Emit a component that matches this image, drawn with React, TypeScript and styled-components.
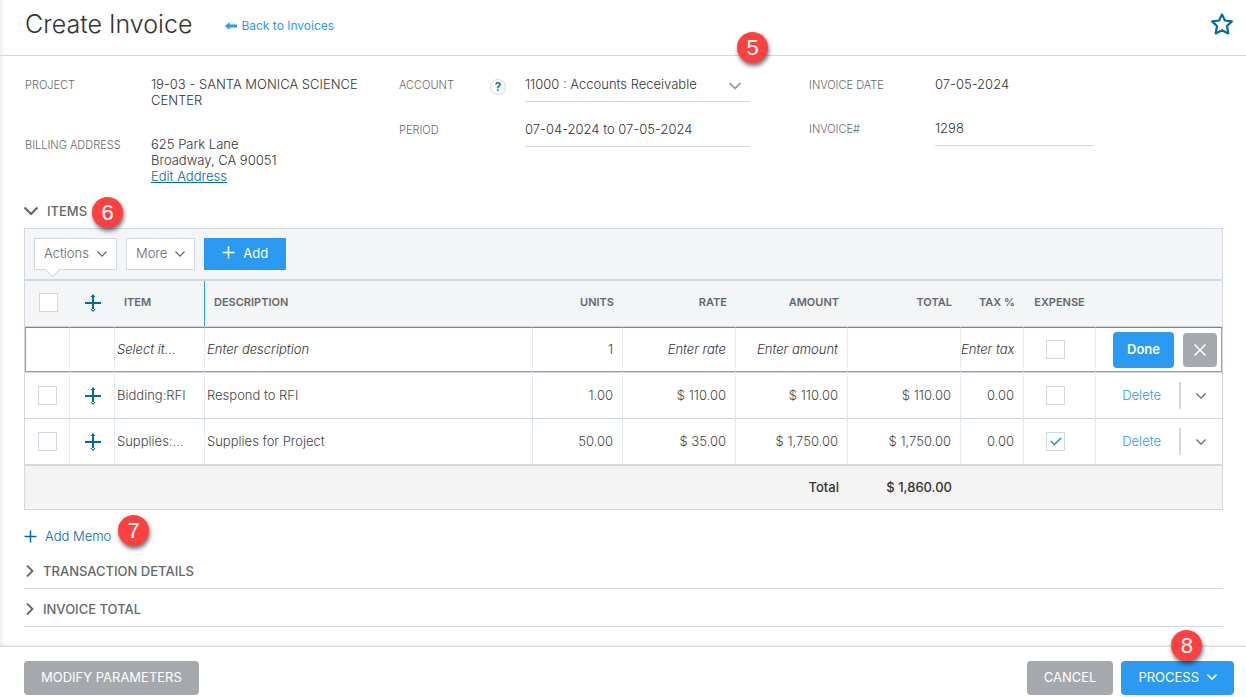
import React from "react";
import styled, { createGlobalStyle, css } from "styled-components";

const color = {
  blue: "#2b9af3",
  deepBlue: "#006ba6",
  line: "#d2d8df",
  panel: "#f3f5f7",
  total: "#f4f4f4",
  gray: "#a5a8ad",
  text: "#333",
  cell: "#444",
  label: "#64676c",
};

const GlobalStyle = createGlobalStyle`
  *, *::before, *::after { box-sizing: border-box; }
  body { margin: 0; background: #fff; }
  body, button, input, select {
    font-family: Inter, "Liberation Sans", sans-serif;
    font-size: 13px;
    line-height: 16px;
    color: ${color.text};
  }
  button { cursor: pointer; }
`;

const Page = styled.div`
  min-height: 100vh;
  display: flex;
  flex-direction: column;
  box-shadow: inset 5px 0 5px -4px #e6e6e6;
`;

const Header = styled.header`
  height: 56px;
  display: flex;
  align-items: center;
  padding: 0 12px 8px 25px;
  border-bottom: 1px solid ${color.line};
`;

const Title = styled.h1`
  margin: 0 33px 0 0;
  font-size: 25px;
  line-height: 32px;
  font-weight: 300;
  color: #333;
`;

const BackLink = styled.a`
  display: flex;
  align-items: center;
  gap: 4px;
  padding-top: 4px;
  color: ${color.blue};
  text-decoration: none;
  font-size: 12px;
`;

const StarButton = styled.button`
  margin-left: auto;
  padding: 0;
  border: 0;
  background: none;
  display: flex;
`;

const Main = styled.main`
  flex: 1;
  padding: 0 23px 18px 24px;
`;

const FormGrid = styled.div`
  display: grid;
  grid-template-columns: 374fr 410fr 414fr;
  padding: 20px 0 19px 1px;
`;

const FormColumn = styled.div<{ $gap: number }>`
  display: flex;
  flex-direction: column;
  gap: ${(p) => p.$gap}px;
`;

const Field = styled.div`
  display: flex;
  align-items: flex-start;
`;

const fieldLabel = css`
  flex: none;
  width: 126px;
  padding-top: 1px;
  font-size: 11px;
  font-weight: 300;
  color: ${color.label};
`;

const FieldName = styled.span`
  ${fieldLabel}
`;

const FieldLabel = styled.label`
  ${fieldLabel}
`;

const FieldValue = styled.div`
  width: 215px;
  font-weight: 300;
`;

const AddressLink = styled.a`
  display: block;
  width: max-content;
  color: ${color.deepBlue};
`;

const LabelGroup = styled.div`
  ${fieldLabel}
  display: flex;
  justify-content: space-between;
  padding-right: 19px;
`;

const HelpButton = styled.button`
  width: 16px;
  height: 16px;
  margin-top: 2px;
  padding: 0;
  border: 1px solid ${color.line};
  border-radius: 50%;
  background: #fff;
  color: ${color.deepBlue};
  font-size: 12px;
  font-weight: 600;
  line-height: 14px;
`;

const ControlWrap = styled.div`
  position: relative;
  width: 225px;
`;

const control = css`
  height: 26px;
  padding: 0 0 9px;
  border: 0;
  border-bottom: 1px solid ${color.line};
  border-radius: 0;
  background: transparent;
  font-weight: 300;
  outline: 0;
`;

const Select = styled.select`
  ${control}
  width: 100%;
  appearance: none;
`;

const TextInput = styled.input<{ $width: number }>`
  ${control}
  width: ${(p) => p.$width}px;
`;

const SelectArrow = styled.span`
  position: absolute;
  right: 9px;
  top: 4px;
  display: flex;
  pointer-events: none;
`;

const Badge = styled.span<{ $left: number; $top: number }>`
  position: absolute;
  left: ${(p) => p.$left}px;
  top: ${(p) => p.$top}px;
  z-index: 2;
  width: 31px;
  height: 31px;
  border-radius: 50%;
  background: #fd4141;
  box-shadow: 1px 3px 4px rgba(0, 0, 0, 0.55);
  color: #fff;
  font: 400 22px/31px "Liberation Sans", sans-serif;
  text-align: center;
`;

const SectionButton = styled.button<{ $gap: number }>`
  position: relative;
  display: flex;
  align-items: center;
  gap: ${(p) => p.$gap}px;
  padding: 0;
  border: 0;
  background: none;
  font-weight: 500;
  color: ${color.label};
`;

const ItemsPanel = styled.section`
  margin-top: 9px;
  border: 1px solid ${color.line};
`;

const Toolbar = styled.div`
  display: flex;
  gap: 9px;
  padding: 9px;
  background: ${color.panel};
  border-bottom: 2px solid ${color.line};
`;

const MenuButton = styled.button<{ $notch?: boolean }>`
  position: relative;
  display: flex;
  align-items: center;
  gap: 8px;
  height: 32px;
  padding: 0 9px 3px;
  border: 1px solid ${color.line};
  background: #fff;
  font-weight: 300;
  color: ${color.label};
  svg {
    margin-top: 3px;
  }
  ${(p) =>
    p.$notch &&
    css`
      &::after {
        content: "";
        position: absolute;
        left: 12px;
        bottom: -6px;
        width: 11px;
        height: 11px;
        background: #fff;
        border: solid ${color.line};
        border-width: 0 1px 1px 0;
        transform: rotate(45deg);
      }
    `}
`;

const AddButton = styled.button`
  display: flex;
  align-items: center;
  gap: 8px;
  height: 32px;
  padding: 0 18px 3px;
  border: 0;
  background: ${color.blue};
  color: #fff;
`;

const Table = styled.table`
  width: 100%;
  table-layout: fixed;
  border-collapse: separate;
  border-spacing: 0;
`;

const Col = styled.col<{ $width?: number }>`
  width: ${(p) => (p.$width ? `${p.$width}px` : "auto")};
`;

type Align = "left" | "right" | "center";

const HeadCell = styled.th<{ $align?: Align; $accent?: boolean }>`
  height: 46px;
  padding: 0 ${(p) => (p.$align === "right" ? 8 : 0)}px ${(p) => (p.$align ? 4 : 2)}px
    ${(p) => (p.$align === "left" ? 9 : p.$align ? 0 : 2)}px;
  background: ${color.panel};
  border-bottom: 1px solid ${color.line};
  border-right: 1px solid ${(p) => (p.$accent ? color.blue : "transparent")};
  font-size: 11px;
  font-weight: 600;
  color: ${color.label};
  text-align: ${(p) => p.$align || "center"};
  white-space: nowrap;
`;

const Cell = styled.td<{ $align?: Align; $end?: number }>`
  height: 46px;
  padding: 0 ${(p) => p.$end ?? (p.$align === "right" ? 9 : 0)}px ${(p) => (p.$align ? 2 : 0)}px
    ${(p) => (p.$align === "left" ? 2 : 0)}px;
  border-bottom: 1px solid ${color.line};
  border-right: 1px dotted ${color.line};
  font-weight: 300;
  color: ${color.cell};
  text-align: ${(p) => p.$align || "center"};
  white-space: nowrap;
  overflow: hidden;
  &:last-child {
    border-right: 0;
  }
`;

const EditRow = styled.tr`
  ${Cell} {
    height: 45px;
    border-top: 1px solid ${color.blue};
    border-bottom-color: #9b9ea3;
  }
  ${Cell}:first-child {
    border-left: 1px solid #9b9ea3;
  }
  ${Cell}:last-child {
    border-right: 1px solid #9b9ea3;
  }
  & + tr ${Cell} {
    height: 47px;
    border-top: 1px solid ${color.line};
  }
`;

const CellInput = styled.input<{ $align?: Align }>`
  display: block;
  width: 100%;
  padding: 0;
  border: 0;
  outline: 0;
  background: transparent;
  font-weight: 300;
  color: ${color.cell};
  text-align: ${(p) => p.$align || "left"};
  &::placeholder {
    color: ${color.text};
    font-style: italic;
    opacity: 1;
  }
`;

const TotalCell = styled.td`
  height: 44px;
  padding: 0 9px 2px 0;
  border-top: 1px solid ${color.line};
  background: ${color.total};
  font-weight: 500;
  color: #333;
  text-align: right;
`;

const CheckWrap = styled.span`
  position: relative;
  display: inline-flex;
  vertical-align: middle;
  svg {
    position: absolute;
    left: 4px;
    top: 5px;
    pointer-events: none;
    visibility: hidden;
  }
  input:checked + svg {
    visibility: visible;
  }
`;

const CheckInput = styled.input`
  appearance: none;
  width: 19px;
  height: 19px;
  margin: 0;
  border: 1px solid ${color.line};
  background: #fff;
`;

const IconButton = styled.button`
  display: inline-flex;
  padding: 0;
  border: 0;
  background: none;
  vertical-align: middle;
`;

const MoveCell = styled(Cell)`
  padding-left: 2px;
`;

const RowActions = styled.div`
  display: flex;
  align-items: center;
  justify-content: flex-end;
`;

const DeleteButton = styled.button`
  padding: 0 18px 2px 0;
  border: 0;
  background: none;
  font-weight: 300;
  color: ${color.blue};
`;

const RowMenu = styled.button`
  display: flex;
  align-items: center;
  height: 27px;
  padding: 0 16px 0 15px;
  border: 0;
  border-left: 2px solid ${color.line};
  background: none;
`;

const EditActions = styled.div`
  display: flex;
  align-items: center;
  justify-content: flex-end;
  gap: 9px;
  padding-right: 4px;
`;

const DoneButton = styled.button`
  height: 36px;
  padding: 0 14px 2px;
  border: 0;
  border-radius: 4px;
  background: ${color.blue};
  font-weight: 600;
  color: #fff;
`;

const CloseButton = styled.button`
  display: flex;
  align-items: center;
  justify-content: center;
  width: 34px;
  height: 34px;
  padding: 0;
  border: 0;
  border-radius: 4px;
  background: ${color.gray};
`;

const MemoButton = styled.button`
  position: relative;
  display: flex;
  align-items: center;
  gap: 8px;
  margin: 18px 0 7px;
  padding: 0;
  border: 0;
  background: none;
  font-weight: 300;
  color: ${color.deepBlue};
`;

const Collapsed = styled.section`
  display: flex;
  align-items: center;
  height: 38px;
  padding-top: 3px;
  border-bottom: 1px solid ${color.line};
`;

const Footer = styled.footer`
  display: flex;
  gap: 8px;
  padding: 14px 12px 2px 24px;
  border-top: 1px solid #dcdcdc;
  box-shadow: 0 -1px 2px rgba(0, 0, 0, 0.1);
  background: #fff;
`;

const FooterButton = styled.button<{ $primary?: boolean; $push?: boolean }>`
  position: relative;
  display: flex;
  align-items: center;
  gap: 8px;
  height: 34px;
  padding: 0 17px 2px;
  margin-left: ${(p) => (p.$push ? "auto" : "0")};
  border: 0;
  border-radius: 4px;
  background: ${(p) => (p.$primary ? color.blue : color.gray)};
  color: #fff;
`;

const Chevron = ({ size = 10, stroke = color.label, width = 1.5, right = false }) => (
  <svg width={size} height={size} viewBox="0 0 12 12" fill="none" stroke={stroke} strokeWidth={width} aria-hidden="true">
    <path d={right ? "M3 0.5 8.5 6 3 11.5" : "M0.5 3 6 8.5 11.5 3"} />
  </svg>
);

const Plus = ({ stroke }: { stroke: string }) => (
  <svg width="13" height="13" viewBox="0 0 13 13" stroke={stroke} strokeWidth="1.5" aria-hidden="true">
    <path d="M6.5 0.5v12M0.5 6.5h12" />
  </svg>
);

const MoveIcon = () => (
  <svg width="16" height="18" viewBox="0 0 16 18" fill={color.deepBlue} aria-hidden="true">
    <path d="M7 2h2v14H7zM0 8h16v2H0zM8 0l2.5 3h-5zM8 18l2.5-3h-5z" />
  </svg>
);

const Check = ({ label, checked = false }: { label: string; checked?: boolean }) => (
  <CheckWrap>
    <CheckInput type="checkbox" aria-label={label} defaultChecked={checked} />
    <svg width="12" height="9" viewBox="0 0 12 9" fill="none" stroke={color.blue} strokeWidth="1.7">
      <path d="M0.7 4 4.2 7.5 11.3 0.8" />
    </svg>
  </CheckWrap>
);

const MoveButton = ({ label }: { label: string }) => (
  <IconButton type="button" aria-label={label}>
    <MoveIcon />
  </IconButton>
);

const columnWidths = [45, 45, 90, undefined, 90, 113, 112, 113, 63, 72, 126];

const rows = [
  { item: "Bidding:RFI", description: "Respond to RFI", units: "1.00", rate: "$ 110.00", amount: "$ 110.00", total: "$ 110.00", tax: "0.00", expense: false },
  { item: "Supplies:...", description: "Supplies for Project", units: "50.00", rate: "$ 35.00", amount: "$ 1,750.00", total: "$ 1,750.00", tax: "0.00", expense: true },
];

export default function App() {
  return (
    <>
      <GlobalStyle />
      <Page>
        <Header>
          <Title>Create Invoice</Title>
          <BackLink href="#invoices">
            <svg width="12" height="8" viewBox="0 0 12 8" fill={color.blue} aria-hidden="true">
              <path d="M4.5 0v2.5H12v3H4.5V8L0 4z" />
            </svg>
            Back to Invoices
          </BackLink>
          <StarButton type="button" aria-label="Add to favorites">
            <svg width="24" height="24" viewBox="0 0 24 24" fill="none" stroke={color.deepBlue} strokeWidth="2.2" strokeLinejoin="round">
              <path d="M12 2.4 14.9 8.5 21.9 9.4 17 14 18.3 21.4 12 18.2 5.7 21.4 7 14 2.1 9.4 9.1 8.5z" />
            </svg>
          </StarButton>
        </Header>

        <Main>
          <FormGrid>
            <FormColumn $gap={28}>
              <Field>
                <FieldName>PROJECT</FieldName>
                <FieldValue>19-03 - SANTA MONICA SCIENCE CENTER</FieldValue>
              </Field>
              <Field>
                <FieldName>BILLING ADDRESS</FieldName>
                <FieldValue>
                  625 Park Lane
                  <br />
                  Broadway, CA 90051
                  <AddressLink href="#address">Edit Address</AddressLink>
                </FieldValue>
              </Field>
            </FormColumn>
            <FormColumn $gap={19}>
              <Field>
                <LabelGroup>
                  <label htmlFor="account">ACCOUNT</label>
                  <HelpButton type="button" aria-label="Account help">?</HelpButton>
                </LabelGroup>
                <ControlWrap>
                  <Select id="account">
                    <option>11000 : Accounts Receivable</option>
                  </Select>
                  <SelectArrow>
                    <Chevron size={12} stroke="#9a9da1" width={1.8} />
                  </SelectArrow>
                  <Badge $left={212} $top={-44}>5</Badge>
                </ControlWrap>
              </Field>
              <Field>
                <FieldLabel htmlFor="period">PERIOD</FieldLabel>
                <TextInput id="period" $width={225} defaultValue="07-04-2024 to 07-05-2024" />
              </Field>
            </FormColumn>
            <FormColumn $gap={27}>
              <Field>
                <FieldName>INVOICE DATE</FieldName>
                <FieldValue>07-05-2024</FieldValue>
              </Field>
              <Field>
                <FieldLabel htmlFor="number">INVOICE#</FieldLabel>
                <TextInput id="number" $width={158} defaultValue="1298" />
              </Field>
            </FormColumn>
          </FormGrid>

          <SectionButton type="button" $gap={9}>
            <Chevron size={14} width={1.8} />
            ITEMS
            <Badge $left={68} $top={-6}>6</Badge>
          </SectionButton>

          <ItemsPanel>
            <Toolbar>
              <MenuButton type="button" $notch>
                Actions <Chevron />
              </MenuButton>
              <MenuButton type="button">
                More <Chevron />
              </MenuButton>
              <AddButton type="button">
                <Plus stroke="#fff" /> Add
              </AddButton>
            </Toolbar>
            <Table>
              <colgroup>
                {columnWidths.map((w, i) => (
                  <Col key={i} $width={w} />
                ))}
              </colgroup>
              <thead>
                <tr>
                  <HeadCell><Check label="Select all" /></HeadCell>
                  <HeadCell><MoveButton label="Reorder" /></HeadCell>
                  <HeadCell $align="left" $accent>ITEM</HeadCell>
                  <HeadCell $align="left">DESCRIPTION</HeadCell>
                  <HeadCell $align="right">UNITS</HeadCell>
                  <HeadCell $align="right">RATE</HeadCell>
                  <HeadCell $align="right">AMOUNT</HeadCell>
                  <HeadCell $align="right">TOTAL</HeadCell>
                  <HeadCell $align="right">TAX %</HeadCell>
                  <HeadCell $align="center">EXPENSE</HeadCell>
                  <HeadCell />
                </tr>
              </thead>
              <tbody>
                <EditRow>
                  <Cell />
                  <Cell />
                  <Cell $align="left"><CellInput aria-label="Item" placeholder="Select it..." /></Cell>
                  <Cell $align="left"><CellInput aria-label="Description" placeholder="Enter description" /></Cell>
                  <Cell $align="right"><CellInput aria-label="Units" $align="right" defaultValue="1" /></Cell>
                  <Cell $align="right"><CellInput aria-label="Rate" $align="right" placeholder="Enter rate" /></Cell>
                  <Cell $align="right"><CellInput aria-label="Amount" $align="right" placeholder="Enter amount" /></Cell>
                  <Cell />
                  <Cell $align="right"><CellInput aria-label="Tax" $align="right" placeholder="Enter tax" /></Cell>
                  <Cell $end={8}><Check label="Expense" /></Cell>
                  <Cell>
                    <EditActions>
                      <DoneButton type="button">Done</DoneButton>
                      <CloseButton type="button" aria-label="Discard">
                        <svg width="12" height="12" viewBox="0 0 12 12" stroke="#fff" strokeWidth="1.5">
                          <path d="M0.5 0.5 11.5 11.5M11.5 0.5 0.5 11.5" />
                        </svg>
                      </CloseButton>
                    </EditActions>
                  </Cell>
                </EditRow>
                {rows.map((row) => (
                  <tr key={row.item}>
                    <Cell><Check label={`Select ${row.item}`} /></Cell>
                    <MoveCell><MoveButton label={`Move ${row.item}`} /></MoveCell>
                    <Cell $align="left">{row.item}</Cell>
                    <Cell $align="left">{row.description}</Cell>
                    <Cell $align="right">{row.units}</Cell>
                    <Cell $align="right">{row.rate}</Cell>
                    <Cell $align="right">{row.amount}</Cell>
                    <Cell $align="right">{row.total}</Cell>
                    <Cell $align="right">{row.tax}</Cell>
                    <Cell $end={8}><Check label={`Expense ${row.item}`} checked={row.expense} /></Cell>
                    <Cell>
                      <RowActions>
                        <DeleteButton type="button">Delete</DeleteButton>
                        <RowMenu type="button" aria-label={`More for ${row.item}`}>
                          <Chevron />
                        </RowMenu>
                      </RowActions>
                    </Cell>
                  </tr>
                ))}
              </tbody>
              <tfoot>
                <tr>
                  <TotalCell colSpan={7}>Total</TotalCell>
                  <TotalCell>$ 1,860.00</TotalCell>
                  <TotalCell colSpan={3} />
                </tr>
              </tfoot>
            </Table>
          </ItemsPanel>

          <MemoButton type="button">
            <Plus stroke={color.deepBlue} /> Add Memo
            <Badge $left={94} $top={-13}>7</Badge>
          </MemoButton>
          <Collapsed>
            <SectionButton type="button" $gap={7}>
              <Chevron size={12} width={1.8} right />
              TRANSACTION DETAILS
            </SectionButton>
          </Collapsed>
          <Collapsed>
            <SectionButton type="button" $gap={7}>
              <Chevron size={12} width={1.8} right />
              INVOICE TOTAL
            </SectionButton>
          </Collapsed>
        </Main>

        <Footer>
          <FooterButton type="button">MODIFY PARAMETERS</FooterButton>
          <FooterButton type="button" $push>CANCEL</FooterButton>
          <FooterButton type="button" $primary>
            PROCESS <Chevron stroke="#fff" width={1.8} />
            <Badge $left={50} $top={-31}>8</Badge>
          </FooterButton>
        </Footer>
      </Page>
    </>
  );
}
